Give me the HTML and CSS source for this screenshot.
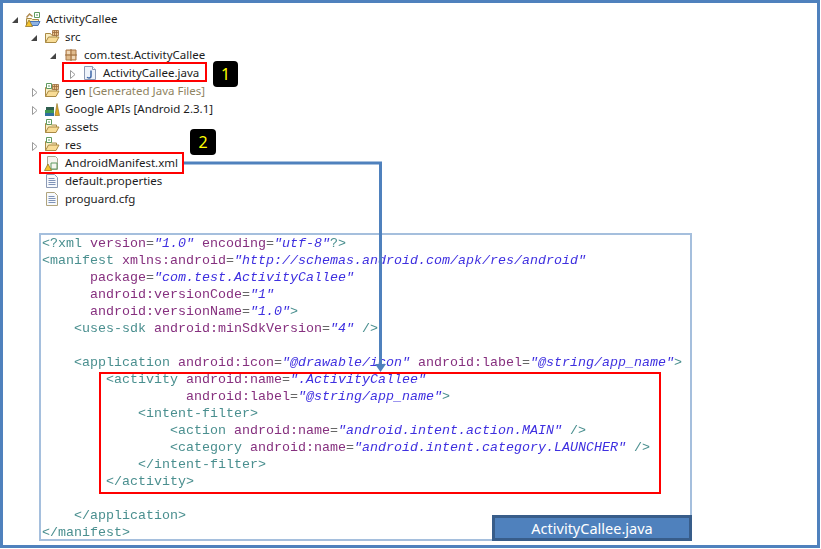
FILE: index.html
```html
<!DOCTYPE html>
<html lang="en">
<head>
<meta charset="utf-8">
<title>ActivityCallee</title>
<link rel="stylesheet" href="styles.css">
</head>
<body>
<svg class="defs" width="0" height="0">
  <defs>
    <symbol id="folder" viewBox="0 0 16 16">
      <path d="M1.500 13.500V4.500h5l1 1.500h5V8" fill="#fbeec2" stroke="#a98a45"/>
      <path d="M1.500 13.500l3-5.500h10.500l-3 5.500z" fill="#f8dc96" stroke="#a98a45"/>
    </symbol>
    <symbol id="doc" viewBox="0 0 16 16">
      <path d="M2.500 1.500h8l3 3v10h-11z" fill="#f7f9fc" stroke="#8c9ab5"/>
      <path d="M4.500 5.500h6M4.500 7.500h7M4.500 9.500h7M4.500 11.500h7" stroke="#7f93b8"/>
    </symbol>
  </defs>
</svg>
<main class="frame">
  <ul class="tree">
    <li class="row l0"><svg class="tw" viewBox="0 0 12 12"><path d="M10 4v6H4z" fill="#444"/></svg><svg class="ic" viewBox="0 0 16 16"><path d="M1.500 14V7.500h5l1 1h6v2" fill="#fbeec2" stroke="#a98a45"/><path d="M3 14.500l2-4h10l-2 4z" fill="#8fb3e2" stroke="#4a76b8"/><path d="M9.500 1.500h5v5h-5z" fill="#fff" stroke="#5f9a60"/><path d="M11 3.500h2v1h-2z" fill="#5f9a60"/><path d="M1.500 6.500l3-3.500 3 2.500" fill="none" stroke="#b08a50" stroke-width="1.500"/><path d="M4 9l3.500 6.500H.5z" fill="#f4c430" stroke="#8a6a18" stroke-width=".7"/></svg><span>ActivityCallee</span></li>
    <li class="row l1"><svg class="tw" viewBox="0 0 12 12"><path d="M10 4v6H4z" fill="#444"/></svg><svg class="ic" viewBox="0 0 16 16"><use href="#folder"/><path d="M8.500 1.500h6v5h-6zM10.500 1.500v5M12.500 1.500v5M8.500 3.500h6" fill="#e8c48e" stroke="#9a6a3a" stroke-width=".8"/></svg><span>src</span></li>
    <li class="row l2"><svg class="tw" viewBox="0 0 12 12"><path d="M10 4v6H4z" fill="#444"/></svg><svg class="ic" viewBox="0 0 16 16"><path d="M3 3h10v10H3z" fill="#e0bb8c" stroke="#a9784a"/><path d="M8 2v12M2 8h12" stroke="#9a6a3a"/><path d="M4 4h3v3H4zM9 9h3v3H9z" fill="#f0d8b8"/></svg><span>com.test.ActivityCallee</span></li>
    <li class="row l3"><svg class="tw" viewBox="0 0 12 12"><path d="M5.500 3.500l4.500 4-4.500 4z" fill="#fff" stroke="#999"/></svg><svg class="ic" viewBox="0 0 16 16"><path d="M2.500 1.500h8l3 3v10h-11z" fill="#eef3fa" stroke="#8c9ab5"/><path d="M10.500 1.500v3h3" fill="#fff" stroke="#8c9ab5"/><path d="M9 5.500v5.500c0 1.500-1 2-2 2-.8 0-1.500-.4-1.800-1" fill="none" stroke="#3f68a8" stroke-width="1.500"/></svg><span>ActivityCallee.java</span></li>
    <li class="row l1"><svg class="tw" viewBox="0 0 12 12"><path d="M5.500 3.500l4.500 4-4.500 4z" fill="#fff" stroke="#999"/></svg><svg class="ic" viewBox="0 0 16 16"><use href="#folder"/><path d="M8.500 1.500h6v5h-6zM10.500 1.500v5M12.500 1.500v5M8.500 3.500h6" fill="#e8c48e" stroke="#9a6a3a" stroke-width=".8"/><path d="M2.500 .5h5v5h-5z" fill="#fff" stroke="#5f9a60"/><path d="M4 2.500h2v1H4z" fill="#5f9a60"/></svg><span>gen <em class="deco">[Generated Java Files]</em></span></li>
    <li class="row l1"><svg class="tw" viewBox="0 0 12 12"><path d="M5.500 3.500l4.500 4-4.500 4z" fill="#fff" stroke="#999"/></svg><svg class="ic" viewBox="0 0 16 16"><path d="M1 12h9v3H1z" fill="#2f6f9f"/><path d="M1 9h9v3H1z" fill="#3f9a50"/><path d="M2 6h8v3H2z" fill="#2f5f4f"/><path d="M11 14.500l2-12 2.500 12z" fill="#e0a828" stroke="#8a6a18" stroke-width=".6"/></svg><span>Google APIs [Android 2.3.1]</span></li>
    <li class="row l1"><span class="tw"></span><svg class="ic" viewBox="0 0 16 16"><use href="#folder"/><path d="M2.500 .5h5v5h-5z" fill="#fff" stroke="#5f9a60"/><path d="M4 2.500h2v1H4z" fill="#5f9a60"/></svg><span>assets</span></li>
    <li class="row l1"><svg class="tw" viewBox="0 0 12 12"><path d="M5.500 3.500l4.500 4-4.500 4z" fill="#fff" stroke="#999"/></svg><svg class="ic" viewBox="0 0 16 16"><use href="#folder"/><path d="M2.500 .5h5v5h-5z" fill="#fff" stroke="#5f9a60"/><path d="M4 2.500h2v1H4z" fill="#5f9a60"/></svg><span>res</span></li>
    <li class="row l1"><span class="tw"></span><svg class="ic" viewBox="0 0 16 16"><path d="M3.500 1.500h8l2 2v11h-10z" fill="#f5f5ee" stroke="#a8a890"/><path d="M7 8h6v6H7z" fill="none" stroke="#5f9a60"/><path d="M4 9l3.500 6.500H.5z" fill="#f4c430" stroke="#8a6a18" stroke-width=".7"/></svg><span>AndroidManifest.xml</span></li>
    <li class="row l1"><span class="tw"></span><svg class="ic" viewBox="0 0 16 16"><use href="#doc"/></svg><span>default.properties</span></li>
    <li class="row l1"><span class="tw"></span><svg class="ic" viewBox="0 0 16 16"><path d="M2.500 1.500h8l3 3v10h-11z" fill="#f7f9fc" stroke="#b0a47e"/><path d="M4.500 5.500h6M4.500 7.500h7M4.500 9.500h7M4.500 11.500h7" stroke="#7f93b8"/></svg><span>proguard.cfg</span></li>
  </ul>

  <pre class="code"><span class="t">&lt;?xml</span> <span class="a">version</span><span class="e">=</span><span class="s">"1.0"</span> <span class="a">encoding</span><span class="e">=</span><span class="s">"utf-8"</span><span class="t">?&gt;</span>
<span class="t">&lt;manifest</span> <span class="a">xmlns:android</span><span class="e">=</span><span class="s">"http://schemas.android.com/apk/res/android"</span>
      <span class="a">package</span><span class="e">=</span><span class="s">"com.test.ActivityCallee"</span>
      <span class="a">android:versionCode</span><span class="e">=</span><span class="s">"1"</span>
      <span class="a">android:versionName</span><span class="e">=</span><span class="s">"1.0"</span><span class="t">&gt;</span>
    <span class="t">&lt;uses-sdk</span> <span class="a">android:minSdkVersion</span><span class="e">=</span><span class="s">"4"</span> <span class="t">/&gt;</span>

    <span class="t">&lt;application</span> <span class="a">android:icon</span><span class="e">=</span><span class="s">"@drawable/icon"</span> <span class="a">android:label</span><span class="e">=</span><span class="s">"@string/app_name"</span><span class="t">&gt;</span>
        <span class="t">&lt;activity</span> <span class="a">android:name</span><span class="e">=</span><span class="s">".ActivityCallee"</span>
                  <span class="a">android:label</span><span class="e">=</span><span class="s">"@string/app_name"</span><span class="t">&gt;</span>
            <span class="t">&lt;intent-filter&gt;</span>
                <span class="t">&lt;action</span> <span class="a">android:name</span><span class="e">=</span><span class="s">"android.intent.action.MAIN"</span> <span class="t">/&gt;</span>
                <span class="t">&lt;category</span> <span class="a">android:name</span><span class="e">=</span><span class="s">"android.intent.category.LAUNCHER"</span> <span class="t">/&gt;</span>
            <span class="t">&lt;/intent-filter&gt;</span>
        <span class="t">&lt;/activity&gt;</span>

    <span class="t">&lt;/application&gt;</span>
<span class="t">&lt;/manifest&gt;</span></pre>

  <div class="mark mark-java"></div>
  <div class="mark mark-manifest"></div>
  <div class="mark mark-activity"></div>
  <div class="badge badge-1">1</div>
  <div class="badge badge-2">2</div>
  <svg class="link" width="821" height="549" viewBox="0 0 821 549"><path d="M184 163H380.500V366" fill="none" stroke="#4f81bd" stroke-width="3"/><path d="M375 364h11l-5.500 8z" fill="#4f81bd"/></svg>
  <div class="caption">ActivityCallee.java</div>
</main>
</body>
</html>
```
FILE: styles.css
```css
* { box-sizing: border-box; }
html, body { margin: 0; padding: 0; background: #fff; }
.defs { position: absolute; }
.frame {
  position: relative;
  width: 820px;
  height: 548px;
  border: 3px solid #4f81bd;
  padding: 7px 0 0 36px;
  overflow: hidden;
  background: #fff;
}
.tree {
  list-style: none;
  margin: 0 0 0 -36px;
  padding: 0;
  font: 11.5px/18px "Noto Sans", "Open Sans", sans-serif;
  color: #1c1c1c;
}
.row { display: flex; align-items: center; height: 18px; white-space: nowrap; }
.row > span:last-child { margin-top: -1px; }
.l0 { padding-left: 5px; }
.l1 { padding-left: 24px; }
.l2 { padding-left: 43px; }
.l3 { padding-left: 62px; }
.tw { width: 12px; height: 12px; margin-right: 5px; flex: none; }
.ic { width: 16px; height: 16px; margin-right: 5px; flex: none; }
.deco { font-style: normal; color: #8f8462; }
.code {
  width: 653px;
  height: 308px;
  margin: 25px 0 0;
  padding: 0 0 0 1px;
  border: 2px solid #a5bfdd;
  font: 13.33px/17px "Liberation Mono", monospace;
  color: #333;
  overflow: hidden;
}
.code span { filter: blur(0.35px); }
.t { color: #4a8f8f; }
.a { color: #86307f; }
.e { color: #666; }
.s { color: #3f30e0; font-style: italic; }
.mark { position: absolute; border: 2px solid #f00; }
.mark-java { left: 59px; top: 59px; width: 145px; height: 20px; }
.mark-manifest { left: 36px; top: 149px; width: 145px; height: 22px; }
.mark-activity { left: 96px; top: 369px; width: 562px; height: 122px; }
.badge {
  position: absolute;
  height: 26px;
  border-radius: 4px;
  background: #000;
  color: #ff0;
  font: 16px/26px "Noto Sans", sans-serif;
  text-align: center;
}
.badge-1 { left: 210px; top: 58px; width: 25px; }
.badge-2 { left: 187px; top: 126px; width: 26px; }
.link { position: absolute; left: -3px; top: -3px; pointer-events: none; }
.caption {
  position: absolute;
  left: 489px;
  top: 512px;
  width: 200px;
  height: 26px;
  border: 3px solid #385d8a;
  background: #4f81bd;
  color: #fff;
  font: 14.5px/20px "Noto Sans", sans-serif;
  text-align: center;
}
```
